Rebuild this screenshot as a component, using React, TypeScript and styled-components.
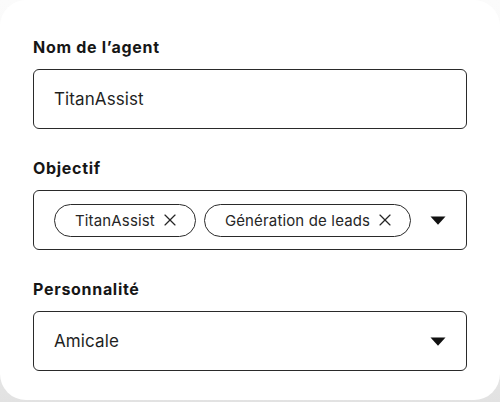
import React from "react";
import styled, { createGlobalStyle } from "styled-components";
import { X } from "lucide-react";

const GlobalStyle = createGlobalStyle`
  html, body {
    margin: 0;
    padding: 0;
    height: 100%;
  }
  body {
    background: linear-gradient(180deg, #fbfbfb 0%, #f1f1f1 60%, #e2e2e2 100%);
    font-family: Inter, "Liberation Sans", sans-serif;
    color: #1c1c1c;
  }
`;

const Card = styled.div`
  width: 500px;
  height: 400px;
  box-sizing: border-box;
  background: #fff;
  border-radius: 26px;
  padding: 37px 33px 0;
  display: flex;
  flex-direction: column;
  gap: 29px;
`;

const Field = styled.div`
  display: flex;
  flex-direction: column;
  gap: 12px;
`;

const Label = styled.label`
  font-size: 16px;
  line-height: 20px;
  font-weight: 700;
  letter-spacing: 0.7px;
  color: #161616;
`;

const Box = styled.div`
  height: 60px;
  box-sizing: border-box;
  border: 1.5px solid #2a2a2a;
  border-radius: 6px;
  display: flex;
  align-items: center;
  padding: 0 20px;
  gap: 8px;
  font-size: 17px;
  color: #1f1f1f;
`;

const Value = styled.span`
  flex: 1;
  letter-spacing: 0.1px;
`;

const Chip = styled.span`
  height: 33px;
  box-sizing: border-box;
  border: 1.5px solid #2a2a2a;
  border-radius: 999px;
  display: inline-flex;
  align-items: center;
  gap: 5px;
  padding: 0 15px 0 20px;
  font-size: 15px;
  letter-spacing: 0.15px;
  color: #262626;
  white-space: nowrap;
`;

const Spacer = styled.span`
  flex: 1;
`;

const Caret = styled.svg`
  width: 16px;
  height: 9px;
  flex-shrink: 0;
`;

function DownCaret() {
  return (
    <Caret viewBox="0 0 16 9">
      <path d="M0.5 0.5 H15.5 L8 8.7 Z" fill="#111" />
    </Caret>
  );
}

export default function App() {
  const tags = ["TitanAssist", "Génération de leads"];
  return (
    <>
      <GlobalStyle />
      <Card>
        <Field>
          <Label>Nom de l’agent</Label>
          <Box>
            <Value>TitanAssist</Value>
          </Box>
        </Field>
        <Field>
          <Label>Objectif</Label>
          <Box>
            {tags.map((t) => (
              <Chip key={t}>
                {t}
                <X size={20} strokeWidth={1.4} />
              </Chip>
            ))}
            <Spacer />
            <DownCaret />
          </Box>
        </Field>
        <Field>
          <Label>Personnalité</Label>
          <Box>
            <Value>Amicale</Value>
            <DownCaret />
          </Box>
        </Field>
      </Card>
    </>
  );
}
